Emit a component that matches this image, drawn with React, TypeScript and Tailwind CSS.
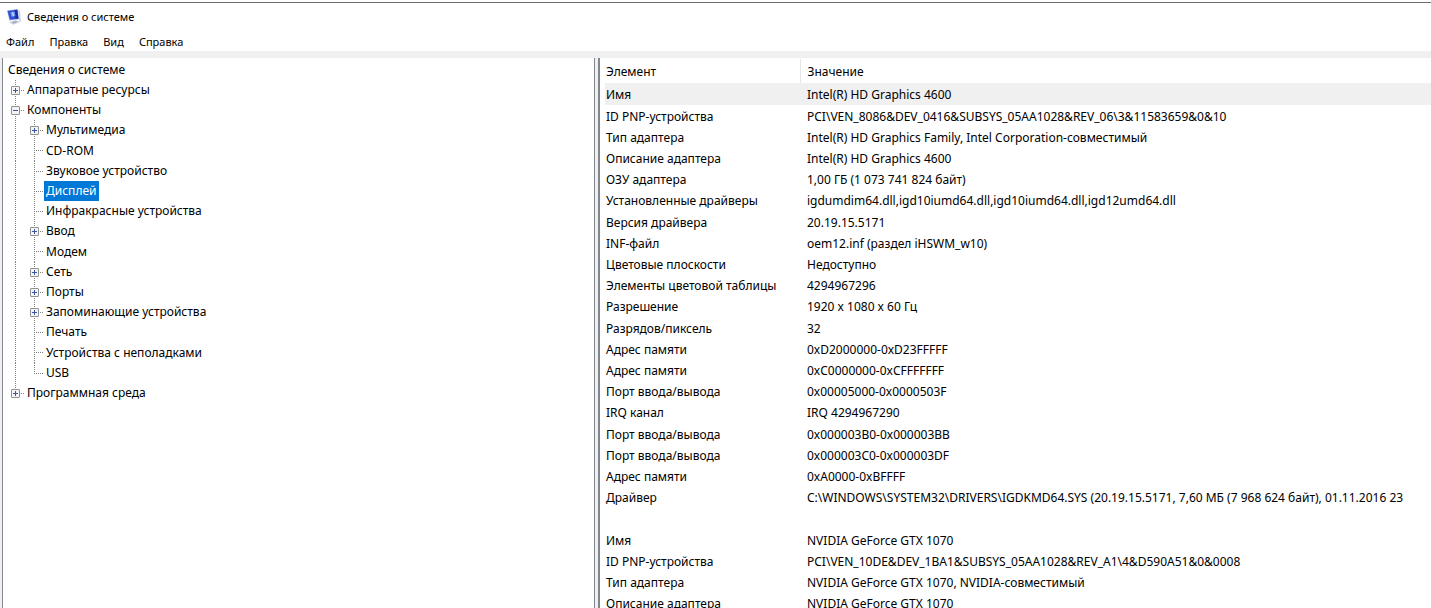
import { useState } from 'react';
import clsx from 'clsx';

interface TreeNode {
  id: string;
  label: string;
  level: number;
  expanded?: boolean;
  last?: boolean;
}

const MENU = ['Файл', 'Правка', 'Вид', 'Справка'];

const NODES: TreeNode[] = [
  { id: 'root', label: 'Сведения о системе', level: 0 },
  { id: 'hardware', label: 'Аппаратные ресурсы', level: 1, expanded: false },
  { id: 'components', label: 'Компоненты', level: 1, expanded: true },
  { id: 'multimedia', label: 'Мультимедиа', level: 2, expanded: false },
  { id: 'cdrom', label: 'CD-ROM', level: 2 },
  { id: 'sound', label: 'Звуковое устройство', level: 2 },
  { id: 'display', label: 'Дисплей', level: 2 },
  { id: 'infrared', label: 'Инфракрасные устройства', level: 2 },
  { id: 'input', label: 'Ввод', level: 2, expanded: false },
  { id: 'modem', label: 'Модем', level: 2 },
  { id: 'network', label: 'Сеть', level: 2, expanded: false },
  { id: 'ports', label: 'Порты', level: 2, expanded: false },
  { id: 'storage', label: 'Запоминающие устройства', level: 2, expanded: false },
  { id: 'printing', label: 'Печать', level: 2 },
  { id: 'problems', label: 'Устройства с неполадками', level: 2 },
  { id: 'usb', label: 'USB', level: 2, last: true },
  { id: 'software', label: 'Программная среда', level: 1, expanded: false, last: true },
];

const ROWS: [string, string][] = [
  ['Имя', 'Intel(R) HD Graphics 4600'],
  ['ID PNP-устройства', 'PCI\\VEN_8086&DEV_0416&SUBSYS_05AA1028&REV_06\\3&11583659&0&10'],
  ['Тип адаптера', 'Intel(R) HD Graphics Family, Intel Corporation-совместимый'],
  ['Описание адаптера', 'Intel(R) HD Graphics 4600'],
  ['ОЗУ адаптера', '1,00 ГБ (1 073 741 824 байт)'],
  ['Установленные драйверы', 'igdumdim64.dll,igd10iumd64.dll,igd10iumd64.dll,igd12umd64.dll'],
  ['Версия драйвера', '20.19.15.5171'],
  ['INF-файл', 'oem12.inf (раздел iHSWM_w10)'],
  ['Цветовые плоскости', 'Недоступно'],
  ['Элементы цветовой таблицы', '4294967296'],
  ['Разрешение', '1920 x 1080 x 60 Гц'],
  ['Разрядов/пиксель', '32'],
  ['Адрес памяти', '0xD2000000-0xD23FFFFF'],
  ['Адрес памяти', '0xC0000000-0xCFFFFFFF'],
  ['Порт ввода/вывода', '0x00005000-0x0000503F'],
  ['IRQ канал', 'IRQ 4294967290'],
  ['Порт ввода/вывода', '0x000003B0-0x000003BB'],
  ['Порт ввода/вывода', '0x000003C0-0x000003DF'],
  ['Адрес памяти', '0xA0000-0xBFFFF'],
  ['Драйвер', 'C:\\WINDOWS\\SYSTEM32\\DRIVERS\\IGDKMD64.SYS (20.19.15.5171, 7,60 МБ (7 968 624 байт), 01.11.2016 23'],
  ['', ''],
  ['Имя', 'NVIDIA GeForce GTX 1070'],
  ['ID PNP-устройства', 'PCI\\VEN_10DE&DEV_1BA1&SUBSYS_05AA1028&REV_A1\\4&D590A51&0&0008'],
  ['Тип адаптера', 'NVIDIA GeForce GTX 1070, NVIDIA-совместимый'],
  ['Описание адаптера', 'NVIDIA GeForce GTX 1070'],
];

function AppIcon() {
  return (
    <svg width="14" height="16" viewBox="0 0 14 16" aria-hidden="true">
      <path d="M0 1.5 10.5 0 12 10.2 2.4 11.4z" fill="#a9b3dc" />
      <path d="M.6 2 10.2.7l1.4 8.8-8.7 1.2z" fill="#2c50cf" />
      <path d="M7.4 1.1 10.2.7l1.4 8.8-3 .4z" fill="#1530a8" />
      <path d="M3.4 3.2 7.6 2.6l.8 4.4-4.1.7z" fill="#6f96ee" />
      <path d="M5.6 3.2 6.4 7.2" stroke="#e8efff" />
      <path d="M11 .8 13 1.6 13.9 13 12.1 12z" fill="#cdd2e0" />
      <path d="M2 13.2 8.6 11l4.8 2-7 2.8z" fill="#cfd2de" />
      <path d="m4.6 13.2 4.2-1.3 2 .9-4.3 1.6z" fill="#a3a9bd" />
    </svg>
  );
}

// connector lines of one indent step
function Branch({ stub, last }: { stub?: boolean; last?: boolean }) {
  return (
    <svg className="h-full w-[19px] shrink-0" aria-hidden="true">
      <line x1="9.5" y1="0" x2="9.5" y2={last ? '11' : '100%'} stroke="#808080" strokeDasharray="1 1" />
      {stub && <line x1="9" y1="10.5" x2="18" y2="10.5" stroke="#808080" strokeDasharray="1 1" />}
    </svg>
  );
}

function Expander({ node, onToggle }: { node: TreeNode; onToggle: () => void }) {
  return (
    <button
      type="button"
      className="h-full w-[19px] shrink-0"
      onClick={onToggle}
      aria-label={`${node.expanded ? 'Свернуть' : 'Развернуть'}: ${node.label}`}
    >
      <svg className="block h-full w-full" aria-hidden="true">
        <line x1="9.5" y1="0" x2="9.5" y2={node.last ? '11' : '100%'} stroke="#808080" strokeDasharray="1 1" />
        <line x1="15" y1="10.5" x2="18" y2="10.5" stroke="#808080" strokeDasharray="1 1" />
        <rect x="5.5" y="6.5" width="8" height="8" rx="0.5" fill="#f4f4f4" stroke="#919191" />
        <path d={node.expanded ? 'M7 10.5h5' : 'M7 10.5h5M9.5 8v5'} stroke="#3a57a7" />
      </svg>
    </button>
  );
}

export default function App() {
  const [selected, setSelected] = useState('display');
  const [nodes, setNodes] = useState(NODES);

  const toggle = (id: string) =>
    setNodes((prev) => prev.map((n) => (n.id === id ? { ...n, expanded: !n.expanded } : n)));

  const componentsOpen = nodes.find((n) => n.id === 'components')?.expanded;
  const visible = nodes.filter((n) => n.level < 2 || componentsOpen);

  return (
    <div className="flex h-screen flex-col overflow-hidden bg-white pt-[2px] font-['Noto_Sans','Open_Sans',sans-serif] text-[12px] leading-4 text-black">
      <header className="shrink-0 border-t border-[#6d6d6d]">
        <div className="flex h-[28px] items-center gap-[6px] pl-[7px] text-[11px]">
          <AppIcon />
          <h1>Сведения о системе</h1>
        </div>
        <nav className="flex h-[20px] items-center gap-[15px] pt-[2px] pl-[6px] text-[11px]">
          {MENU.map((item) => (
            <button key={item} type="button">
              {item}
            </button>
          ))}
        </nav>
      </header>

      <main className="flex min-h-0 flex-1 bg-[#f0f0f0] pt-[7px] pl-[2px]">
        <section className="w-[593px] shrink-0 overflow-hidden border-x border-[#828790] bg-white pt-[2px] pl-[3px]">
          <ul role="tree" aria-label="Сведения о системе">
            {visible.map((node) => (
              <li
                key={node.id}
                role="treeitem"
                aria-selected={node.id === selected}
                aria-level={node.level + 1}
                className="flex h-[20px] items-stretch nth-[5n]:h-[21px]"
              >
                {node.level === 2 && <Branch />}
                {node.level > 0 &&
                  (node.expanded === undefined ? (
                    <Branch stub last={node.last} />
                  ) : (
                    <Expander node={node} onToggle={() => toggle(node.id)} />
                  ))}
                <button
                  type="button"
                  onClick={() => setSelected(node.id)}
                  className={clsx(
                    'px-[2px] whitespace-nowrap',
                    node.id === selected && 'bg-[#0078d7] text-white',
                  )}
                >
                  {node.label}
                </button>
              </li>
            ))}
          </ul>
        </section>

        <section className="ml-[3px] min-w-0 flex-1 overflow-hidden border-l-2 border-[#828790] bg-white pt-px pl-[5px]">
          <table className="w-full table-fixed border-collapse text-left whitespace-nowrap">
            <colgroup>
              <col className="w-[195px]" />
              <col />
            </colgroup>
            <thead>
              <tr className="h-[24px]">
                <th className="border-r border-[#e5e5e5] px-px pt-[2px] pb-0 font-normal">Элемент</th>
                <th className="pt-[2px] pb-0 pl-[7px] font-normal">Значение</th>
              </tr>
            </thead>
            <tbody>
              {ROWS.map(([name, value], i) => (
                <tr key={i} className="h-[21px] first:bg-[#f0f0f0] nth-[5n+1]:h-[22px]">
                  <td className="px-px pt-[2px]">{name}</td>
                  <td className="overflow-hidden pt-[2px] pl-[7px]">{value}</td>
                </tr>
              ))}
            </tbody>
          </table>
        </section>
      </main>
    </div>
  );
}
